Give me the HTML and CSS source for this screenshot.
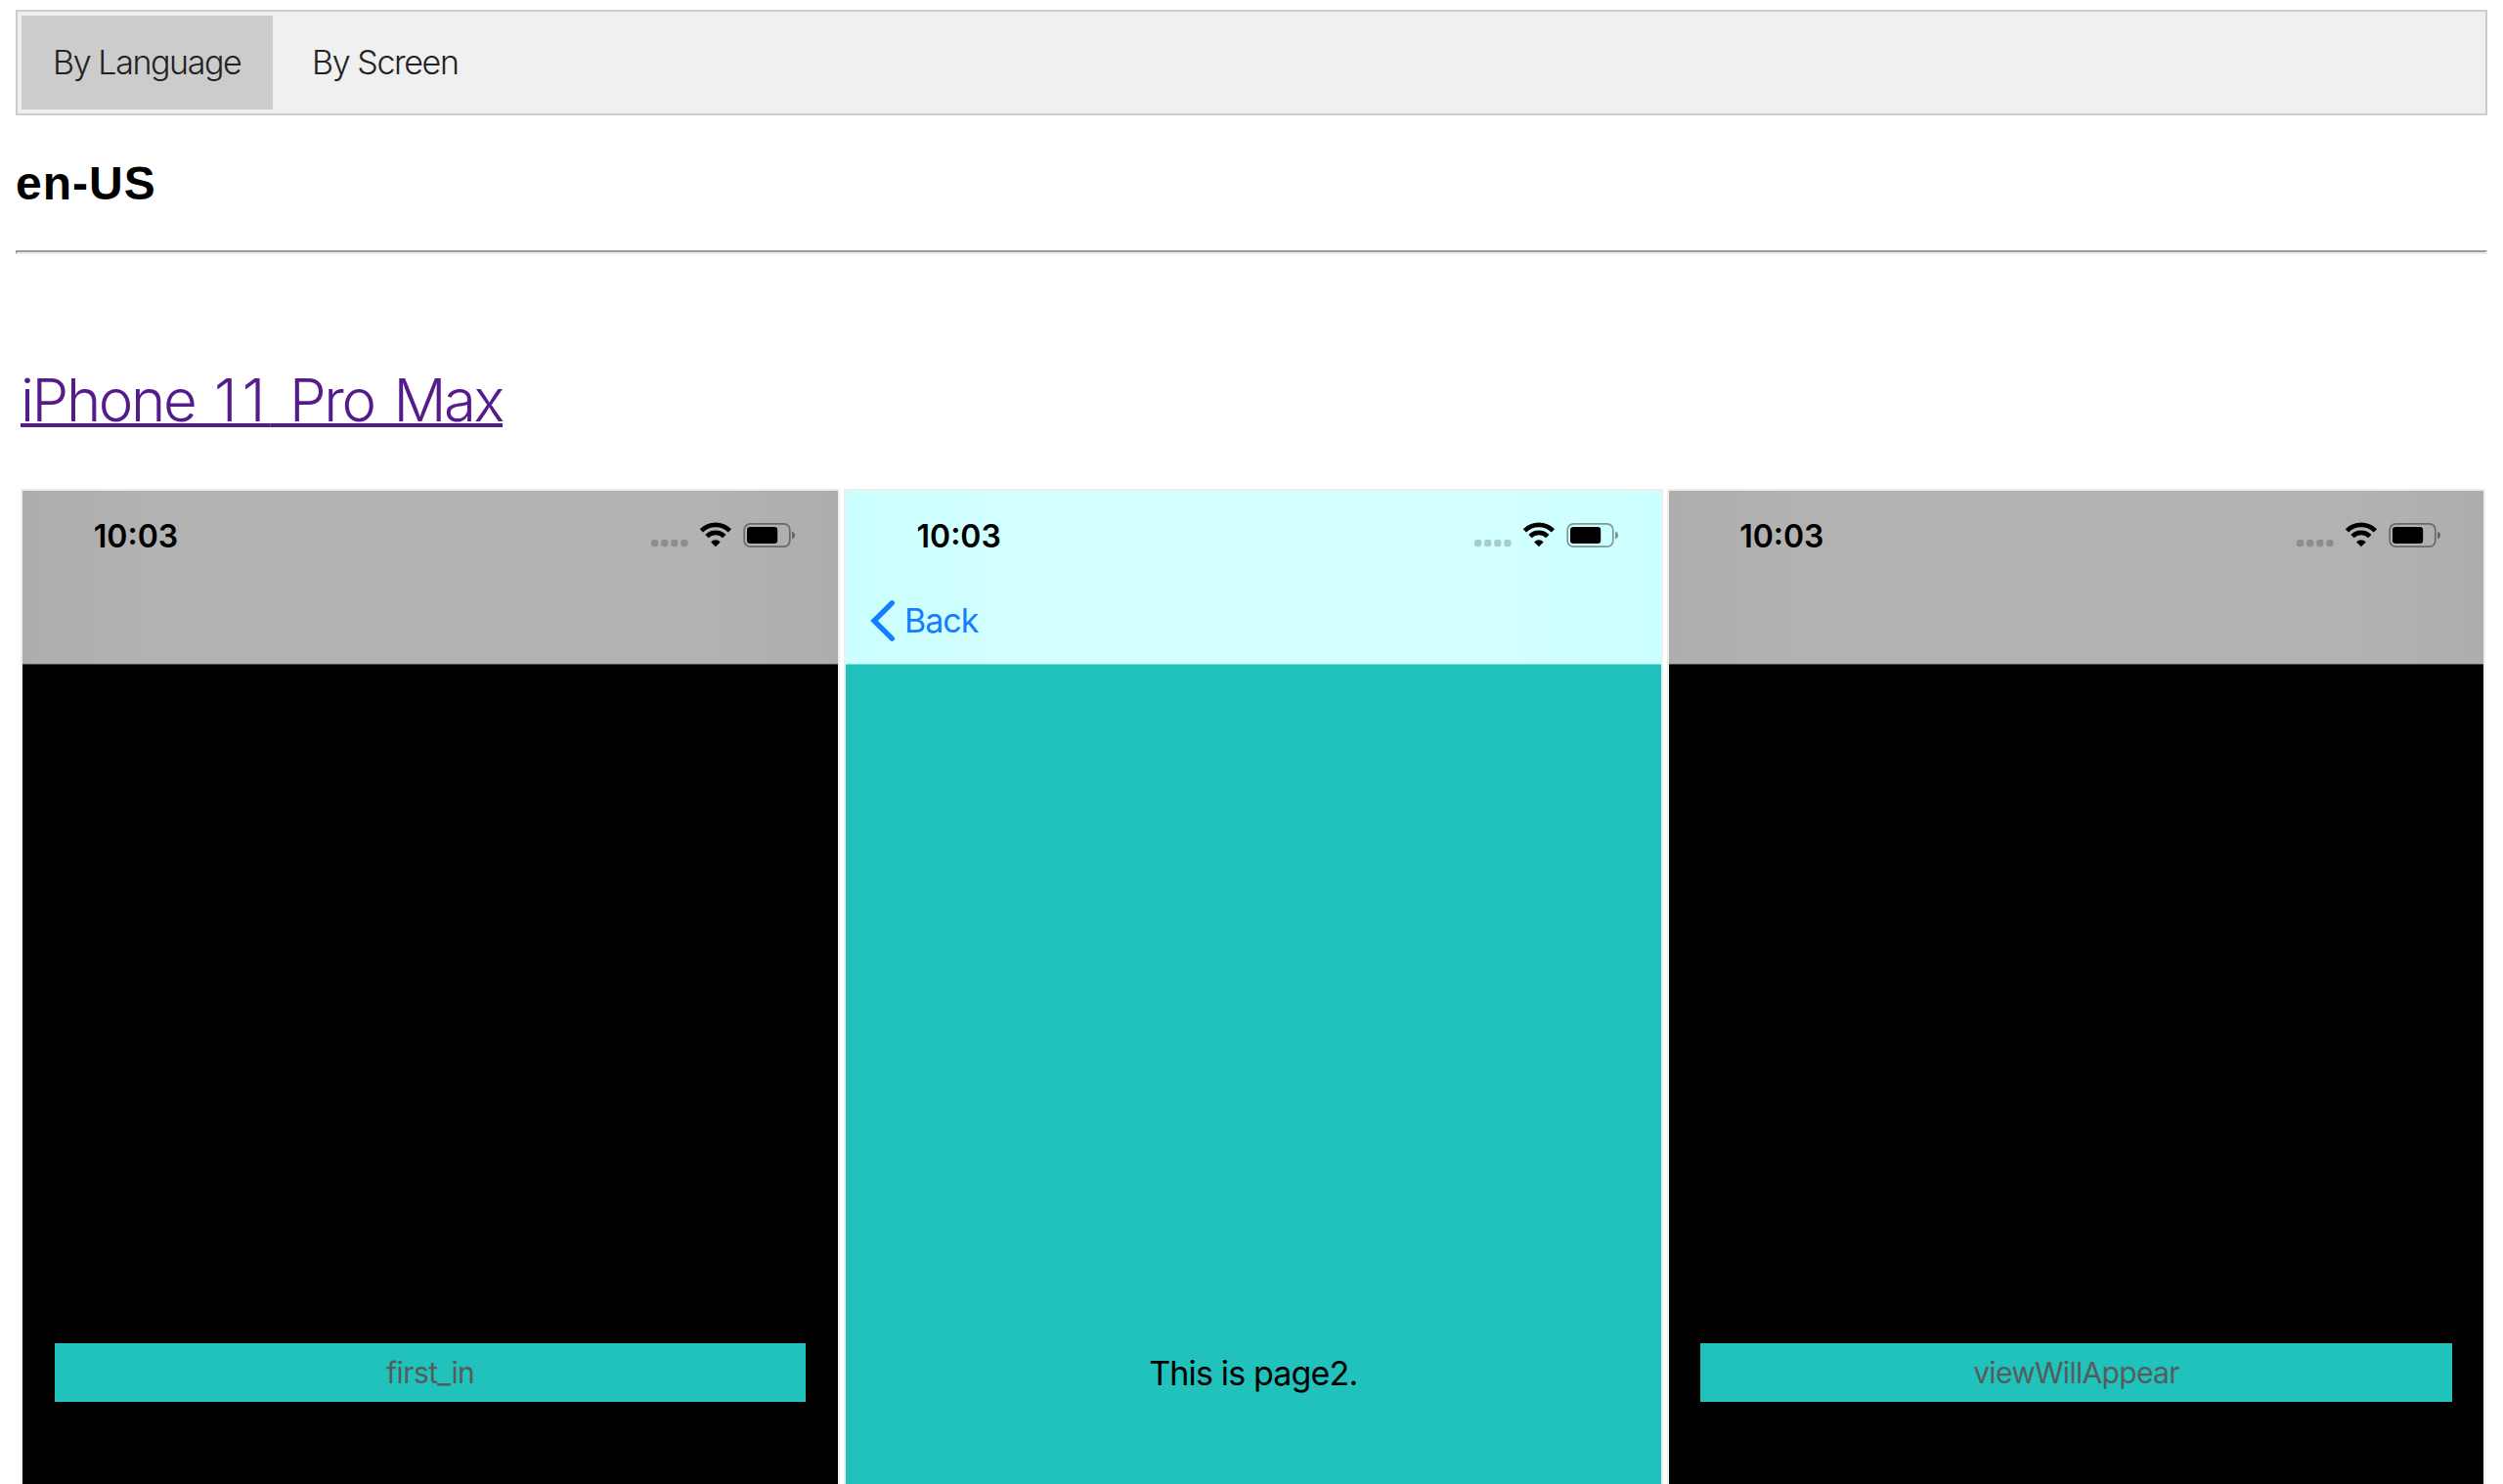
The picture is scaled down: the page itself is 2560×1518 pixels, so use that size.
FILE: index.html
```html
<!DOCTYPE html>
<html lang="en">
<head>
<meta charset="utf-8">
<title>Screenshots</title>
<link rel="stylesheet" href="styles.css">
</head>
<body>
<svg class="symbols" aria-hidden="true">
  <symbol id="status" viewBox="0 0 160 36">
    <g fill="#000" opacity=".2">
      <rect x="6" y="22" width="7.2" height="7.2" rx="2.4"/>
      <rect x="16.1" y="22" width="7.2" height="7.2" rx="2.4"/>
      <rect x="26.2" y="22" width="7.2" height="7.2" rx="2.4"/>
      <rect x="36.3" y="22" width="7.2" height="7.2" rx="2.4"/>
    </g>
    <g fill="none" stroke="#000" stroke-width="4.7">
      <path d="M57.4 12.8a20.6 20.6 0 0 1 29 0"/>
      <path d="M63 18.6a12.6 12.6 0 0 1 17.8 0"/>
    </g>
    <path d="M71.9 29.3l-4.8-4.9a6.6 6.6 0 0 1 9.6 0z"/>
    <rect x="101.2" y="5.9" width="46.6" height="23.2" rx="6" fill="none" stroke="#000" stroke-opacity=".4" stroke-width="1.7"/>
    <rect x="104" y="9" width="31.2" height="17" rx="3.2"/>
    <path d="M150.2 13.4q2.8 1.2 2.8 4t-2.8 4z" opacity=".45"/>
  </symbol>
</svg>
<nav class="tabs">
  <a class="tab tab-active">By Language</a>
  <a class="tab tab-screen">By Screen</a>
</nav>
<h1 class="language">en-US</h1>
<hr class="rule">
<h2 class="device"><a class="device-link" href="#">iPhone <span class="digits">11</span> Pro Max</a></h2>
<main class="shots">
  <section class="shot dark">
    <header class="bar">
      <div class="status"><span class="time">10:03</span><svg class="status-icons"><use href="#status"/></svg></div>
    </header>
    <div class="button"><span class="label-first">first_in</span></div>
  </section>
  <section class="shot teal">
    <header class="bar">
      <div class="status"><span class="time">10:03</span><svg class="status-icons"><use href="#status"/></svg></div>
      <div class="back"><svg class="chevron" viewBox="0 0 26 44"><path d="M22.3 3.8L4 22l18.3 18.2" fill="none" stroke="#157efb" stroke-width="5.4" stroke-linecap="round" stroke-linejoin="miter"/></svg><span class="back-text">Back</span></div>
    </header>
    <div class="message">This is page2.</div>
  </section>
  <section class="shot dark">
    <header class="bar">
      <div class="status"><span class="time">10:03</span><svg class="status-icons"><use href="#status"/></svg></div>
    </header>
    <div class="button"><span class="label-view">viewWillAppear</span></div>
  </section>
</main>
</body>
</html>
```
FILE: styles.css
```css
* { box-sizing: border-box; }
body {
  margin: 0;
  padding: 10px 16px 0;
  background: #fff;
  font-family: Inter, "Liberation Sans", sans-serif;
}
.symbols { display: none; }
.tabs {
  display: flex;
  height: 108px;
  padding: 4px;
  border: 2px solid #ccc;
  background: #f0f0f0;
}
.tab {
  padding: 0 32px;
  font-weight: 300;
  font-size: 34px;
  line-height: 96px;
  letter-spacing: -1.4px;
  white-space: nowrap;
  color: #222;
}
.tab-active { width: 257px; background: #ccc; }
.tab-screen { margin-left: 8px; }
.language {
  margin: 42px 0 0;
  font: bold 48px/56px "Liberation Sans", sans-serif;
  letter-spacing: 1px;
  height: 96px;
}
.rule {
  margin: 0;
  height: 4px;
  border: 2px solid #9a9a9a;
  border-bottom-color: #eee;
  border-right-color: #eee;
}
.device {
  margin: 113px 0 0 5px;
  height: 127px;
  font-weight: 300;
  font-size: 60px;
  line-height: 72px;
  letter-spacing: -2.4px;
  word-spacing: 5.3px;
  white-space: nowrap;
}
.digits { letter-spacing: 5px; }
.device-link {
  color: #551a8b;
  text-decoration-thickness: 4px;
  text-underline-offset: 2px;
  text-decoration-skip-ink: none;
}
.shots {
  display: grid;
  grid-template-columns: repeat(3, 837.67px);
  gap: 4px;
  margin-left: 5.33px;
}
.shot {
  height: 1018px;
  border: 2px solid #eee;
  border-bottom: 0;
}
.dark { background: #000; }
.teal { background: #21c1bc; }
.bar { height: 178px; }
.dark .bar {
  border-bottom: 1px solid #4a4a4a;
  background: linear-gradient(90deg, #adadad, #b2b2b2 15%, #b2b2b2 85%, #adadad);
}
.teal .bar {
  border-bottom: 1px solid #7addd9;
  background: linear-gradient(90deg, #cbffff, #d2ffff 18%, #d2ffff 82%, #cbffff);
}
.status {
  display: flex;
  justify-content: space-between;
  padding: 28px 37px 0 72.5px;
}
.time {
  font-weight: 600;
  font-size: 32px;
  line-height: 36px;
  padding-top: 1px;
}
.status-icons { width: 160px; height: 36px; }
.back {
  display: flex;
  align-items: center;
  padding: 46px 0 0 25px;
}
.chevron { width: 26px; height: 44px; margin-right: 9px; }
.back-text {
  font-size: 34px;
  line-height: 44px;
  letter-spacing: -1px;
  color: #157efb;
}
.button {
  margin: 694px 32.5px 0 32.5px;
  height: 60px;
  background: #21c1bc;
  text-align: center;
  font-size: 30px;
  line-height: 60px;
  letter-spacing: -0.6px;
  color: #555d5c;
}
.label-view { letter-spacing: -0.7px; }
.message {
  margin-top: 694px;
  text-align: center;
  font-size: 34px;
  line-height: 62px;
  letter-spacing: -0.85px;
  color: #000;
}
```
